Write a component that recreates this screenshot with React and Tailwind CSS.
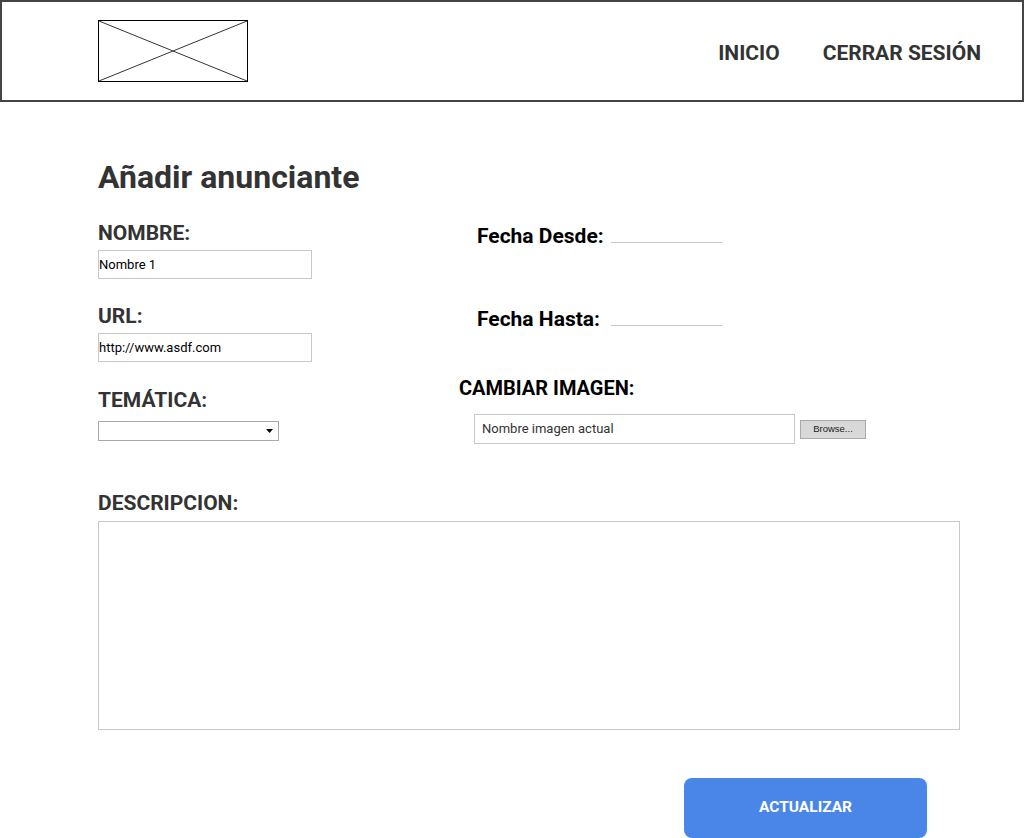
export default function App() {
  const font = { fontFamily: "Roboto, 'Liberation Sans', sans-serif" };
  return (
    <div className="w-[1024px] h-[838px] bg-white overflow-hidden" style={font}>
      <header className="h-[102px] border-2 border-[#444] flex items-center justify-between pl-[96px] pr-[41px]">
        <div className="w-[150px] h-[62px] border border-black">
          <svg width="148" height="60" viewBox="0 0 148 60" className="block">
            <line x1="0" y1="0" x2="148" y2="60" stroke="#333" strokeWidth="1" />
            <line x1="0" y1="60" x2="148" y2="0" stroke="#333" strokeWidth="1" />
          </svg>
        </div>
        <nav className="flex gap-[43px] pt-[3px] text-[21px] leading-[20px] font-bold text-[#333]">
          <span>INICIO</span>
          <span>CERRAR SESIÓN</span>
        </nav>
      </header>

      <main className="pl-[98px]">
        <h1 className="mt-[59px] text-[32px] leading-[32px] font-bold text-[#333]">Añadir anunciante</h1>

        <div className="flex items-start">
          <div className="w-[361px]">
            <div className="mt-[30px] text-[21px] leading-[20px] font-bold text-[#333]">NOMBRE:</div>
            <div className="mt-[7px] w-[214px] h-[29px] border border-[#c8c8c8] flex items-center text-[13px] text-black">Nombre 1</div>

            <div className="mt-[27px] text-[21px] leading-[20px] font-bold text-[#333]">URL:</div>
            <div className="mt-[7px] w-[214px] h-[29px] border border-[#c8c8c8] flex items-center text-[13px] text-black">http://www.asdf.com</div>

            <div className="mt-[28px] text-[21px] leading-[20px] font-bold text-[#333]">TEMÁTICA:</div>
            <div className="mt-[11px] w-[181px] h-[20px] border border-[#aaa] flex items-center justify-end pr-[5px]">
              <svg width="7" height="4" viewBox="0 0 7 4"><polygon points="0,0 7,0 3.5,4" fill="#000" /></svg>
            </div>
          </div>

          <div className="flex-1">
            <div className="mt-[33px] ml-[18px] flex items-end">
              <span className="text-[21px] leading-[20px] font-bold text-black">Fecha Desde:</span>
              <span className="ml-[7px] mb-[3px] w-[111px] h-px bg-[#c8c8c8]"></span>
            </div>
            <div className="mt-[63px] ml-[18px] flex items-end">
              <span className="text-[21px] leading-[20px] font-bold text-black">Fecha Hasta:</span>
              <span className="ml-[11px] mb-[3px] w-[111px] h-px bg-[#c8c8c8]"></span>
            </div>
            <div className="mt-[49px] text-[20px] leading-[20px] font-bold text-black">CAMBIAR IMAGEN:</div>
            <div className="mt-[16px] ml-[15px] flex items-center gap-[5px]">
              <div className="w-[321px] h-[30px] border border-[#c8c8c8] pl-[7px] flex items-center text-[13px] text-[#333]">Nombre imagen actual</div>
              <div className="w-[66px] h-[19px] bg-[#d8d8d8] border border-[#aaa] flex items-center justify-center text-[9.5px] text-[#222]" style={{ fontFamily: "'Liberation Sans', sans-serif" }}>Browse...</div>
            </div>
          </div>
        </div>

        <div className="mt-[49px] text-[21px] leading-[20px] font-bold text-[#333]">DESCRIPCION:</div>
        <div className="mt-[8px] w-[862px] h-[209px] border border-[#c8c8c8]"></div>

        <div className="mt-[48px] ml-[586px] w-[243px] h-[60px] rounded-[8px] bg-[#4a86e8] flex items-center justify-center text-white font-bold text-[15.5px]">ACTUALIZAR</div>
      </main>
    </div>
  );
}
